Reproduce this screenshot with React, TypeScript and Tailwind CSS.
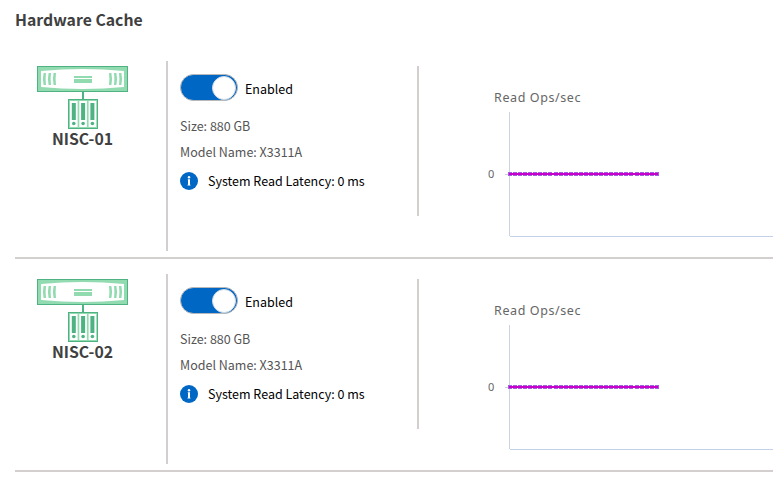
type Cache = {
  id: number;
  name: string;
  size: string;
  model: string;
  latency: string;
};

const caches: Cache[] = [
  { id: 1, name: "NISC-01", size: "880 GB", model: "X3311A", latency: "0 ms" },
  { id: 2, name: "NISC-02", size: "880 GB", model: "X3311A", latency: "0 ms" },
];

// x position of every sample on the chart
const samples = Array.from({ length: 30 }, (_, i) => Math.round(17 + i * 5.06));

function ControllerIcon() {
  return (
    <svg width="92" height="64" viewBox="0 0 92 64" className="block">
      <rect x="0.5" y="0.5" width="90" height="25" fill="#92dbb0" stroke="#4fb283" />
      <path d="M4 5Q45.5 1 87 5V21Q45.5 25 4 21Z" fill="#fff" />
      <g fill="#92dbb0">
        <path d="M6.6 7H9Q8.2 13 9 19H6.6Q5.2 13 6.6 7Z" />
        <path d="M11.6 7H14Q13.2 13 14 19H11.6Q10.2 13 11.6 7Z" />
        <path d="M16.6 7H19Q18.2 13 19 19H16.6Q15.2 13 16.6 7Z" />
        <path d="M72 7H74.4Q75.8 13 74.4 19H72Q72.8 13 72 7Z" />
        <path d="M77 7H79.4Q80.8 13 79.4 19H77Q77.8 13 77 7Z" />
        <path d="M82 7H84.4Q85.8 13 84.4 19H82Q82.8 13 82 7Z" />
      </g>
      <path d="M37 10h18v2h-18zM37 13h18v4h-18z" fill="#92dbb0" />
      <path d="M45 26h2v7h-2z" fill="#4fb283" />
      <rect x="31.5" y="33.5" width="29" height="29" fill="#92dbb0" stroke="#4fb283" />
      {[33, 42.3, 51.6].map((x) => (
        <g key={x}>
          <rect x={x} y="35" width="7.6" height="26" fill="#fff" />
          <rect x={x + 1.8} y="37" width="4" height="17" fill="#4fb283" />
          <circle cx={x + 3.8} cy="57.5" r="1.8" fill="#4fb283" />
        </g>
      ))}
    </svg>
  );
}

function Toggle() {
  return (
    <button
      role="switch"
      aria-checked="true"
      className="flex h-[27px] w-[58px] items-center justify-end rounded-full border border-[#b8b8b8] bg-[#0067c5] pr-px"
    >
      <span className="h-6 w-6 rounded-full border border-[#cfdae4] bg-white" />
    </button>
  );
}

function InfoIcon() {
  return (
    <svg width="18" height="18" viewBox="0 0 18 18" className="block">
      <circle cx="9" cy="9" r="9" fill="#0067c5" />
      <circle cx="9" cy="5.2" r="1.2" fill="#fff" />
      <path d="M7.8 7.3H10v5.4h.5v.8h-3v-.8h.5V8.1h-.2z" fill="#fff" />
    </svg>
  );
}

function ReadOpsChart() {
  return (
    <svg width="282" height="160" viewBox="0 0 282 160" className="block">
      <text x="3" y="15" fill="#666" className="font-['Noto_Sans'] text-[12.5px] tracking-[0.6px]">
        Read Ops/sec
      </text>
      <text x="-3" y="91" fill="#666" className="font-['Noto_Sans'] text-[11px]">
        0
      </text>
      <g shapeRendering="crispEdges">
        <path d="M18 25h1v124h-1z" fill="#ccd1e6" />
        <path d="M19 149h263v1H19z" fill="#c3d2ea" />
        <path d="M14 87h4v1h-4z" fill="#ccd1e6" />
        {samples.map((x) => (
          <rect key={x} x={x} y="85" width="4" height="4" fill="#a35ee0" />
        ))}
        <path d="M18 86h149v2H18z" fill="#c800cc" />
      </g>
    </svg>
  );
}

function CacheRow({ cache }: { cache: Cache }) {
  return (
    <div className="flex h-[213px] items-start border-b-2 border-[#d4cfcf] pt-[15px]">
      <div className="flex h-[190px] w-[153px] shrink-0 flex-col border-r-2 border-[#d4cfcf] pt-[5px] pl-[22px]">
        <ControllerIcon />
        <span className="-mt-px w-[91px] text-center text-[15.8px] leading-5 font-bold whitespace-nowrap text-[#404040]">
          {cache.name}
        </span>
      </div>
      <div className="mt-[5px] h-[150px] w-[251px] shrink-0 border-r-2 border-[#d4cfcf] pt-2 pl-3 text-[12.5px] whitespace-nowrap text-[#555]">
        <div className="flex items-center gap-[7px] text-black">
          <Toggle />
          <span className="pt-[3px] leading-5">Enabled</span>
        </div>
        <div className="mt-[15px] leading-5">Size: {cache.size}</div>
        <div className="mt-1.5 leading-5">Model Name: {cache.model}</div>
        <div className="mt-[9px] flex items-center gap-2.5 leading-5 text-black">
          <InfoIcon />
          <span>System Read Latency: {cache.latency}</span>
        </div>
      </div>
      <div className="mt-[26px] ml-[72px] shrink-0 [&>svg]:overflow-visible">
        <ReadOpsChart />
      </div>
    </div>
  );
}

export default function App() {
  return (
    <div className="h-[483px] w-[773px] overflow-hidden bg-white pl-[15px] font-['Noto_Sans_CJK_SC',sans-serif]">
      <h1 className="h-[46px] pt-[9px] text-[15.8px] leading-[22px] font-bold text-[#404040]">Hardware Cache</h1>
      {caches.map((cache) => (
        <CacheRow key={cache.id} cache={cache} />
      ))}
    </div>
  );
}
